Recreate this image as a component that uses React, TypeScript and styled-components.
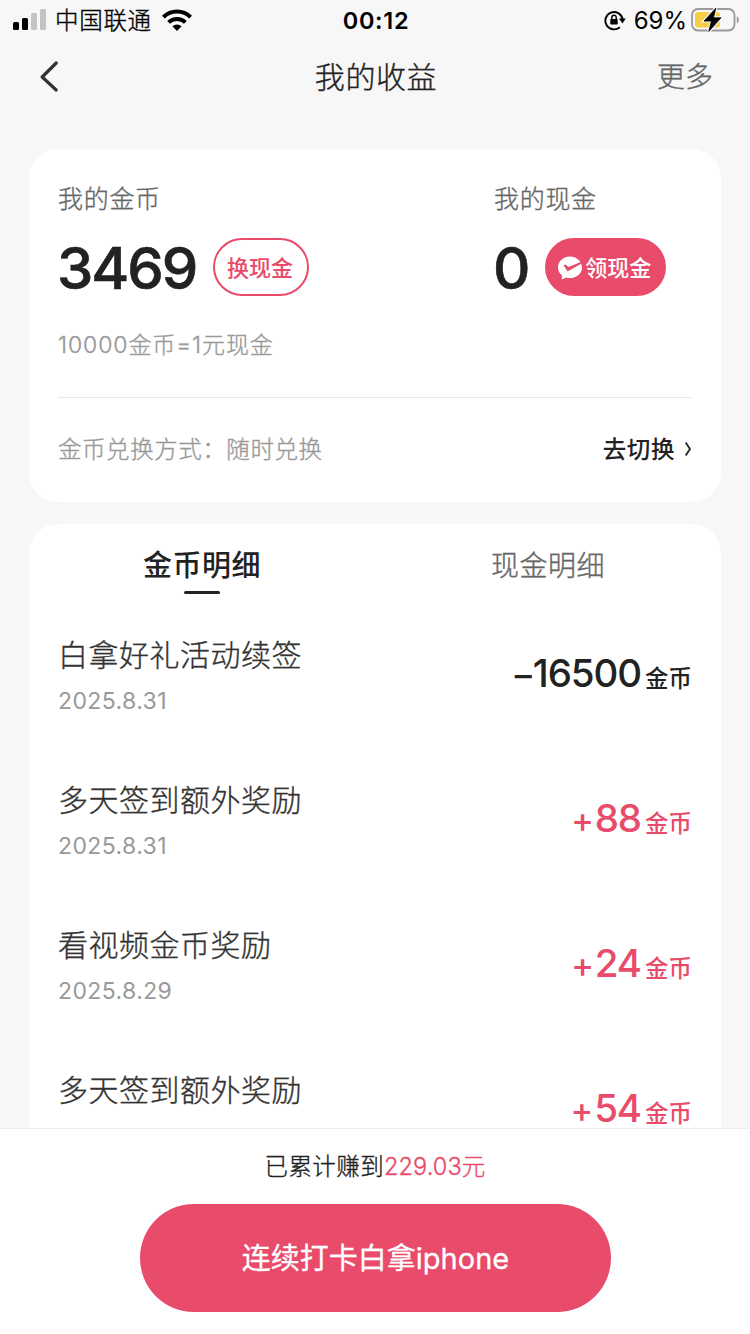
import React from 'react';
import styled, { createGlobalStyle, css } from 'styled-components';

const PINK = '#e94b6a';

const GlobalStyle = createGlobalStyle`
  * { box-sizing: border-box; }
  body {
    margin: 0;
    background: #f7f7f7;
    font-family: Inter, 'Noto Sans CJK SC', sans-serif;
    color: #222;
  }
  button { font-family: inherit; border: 0; background: none; padding: 0; margin: 0; }
`;

/* A weight between light and regular for Chinese text. */
const bookWeight = css`
  font-weight: 300;
  -webkit-text-stroke: 0.35px currentColor;
`;

const Screen = styled.div`
  width: 750px;
  height: 1334px;
  display: flex;
  flex-direction: column;
  overflow: hidden;
  background: #f7f7f7;
`;

const StatusBar = styled.header`
  height: 40px;
  flex: none;
  display: grid;
  grid-template-columns: 1fr auto 1fr;
  grid-template-rows: 40px;
  align-items: center;
  padding: 0 11px 0 13px;
  color: #000;
  line-height: 38px;
  svg { display: block; flex: none; }
`;

const StatusSide = styled.div<{ $end?: boolean }>`
  display: flex;
  align-items: center;
  height: 40px;
  justify-content: ${(p) => (p.$end ? 'flex-end' : 'flex-start')};
`;

const Carrier = styled.span`
  font-size: 23.5px;
  letter-spacing: 0.7px;
  padding-top: 2px;
  margin: 0 10px 0 8px;
  ${bookWeight}
`;

const Clock = styled.span`
  font-size: 23.5px;
  font-weight: 600;
  letter-spacing: 0.7px;
  padding-top: 2px;
`;

const Percent = styled.span`
  font-size: 24px;
  padding-top: 2px;
  margin: 0 4px 0 8px;
`;

const NavBar = styled.nav`
  height: 72px;
  flex: none;
  display: grid;
  grid-template-columns: 1fr auto 1fr;
  align-items: center;
  padding: 0 37px 0 39px;
`;

const BackButton = styled.button`
  display: flex;
`;

const NavTitle = styled.h1`
  margin: 0;
  padding-top: 2px;
  font-size: 30px;
  letter-spacing: 0.6px;
  line-height: 40px;
  ${bookWeight}
`;

const More = styled.button`
  justify-self: end;
  padding-top: 1px;
  font-size: 28px;
  line-height: 40px;
  color: #666;
  ${bookWeight}
`;

const Content = styled.main`
  flex: 1;
  min-height: 0;
  overflow: hidden;
  display: flex;
  flex-direction: column;
  gap: 22px;
  padding: 37px 29px 0;
`;

const Card = styled.section`
  flex: none;
  background: #fff;
  border-radius: 29px;
`;

const BalanceCard = styled(Card)`
  height: 353px;
  padding: 29px 29px 0;
`;

const Balances = styled.div`
  display: grid;
  grid-template-columns: 436px 1fr;
`;

const Label = styled.div`
  font-size: 25px;
  letter-spacing: 0.7px;
  line-height: 42px;
  height: 40px;
  color: #666;
  ${bookWeight}
`;

const ValueRow = styled.div`
  display: flex;
  align-items: center;
  height: 58px;
  margin-top: 20px;
  gap: 17px;
`;

const Value = styled.strong`
  margin-left: -1px;
  padding-top: 2px;
  font-size: 58px;
  font-weight: 500;
  letter-spacing: -2.1px;
  line-height: 56px;
  -webkit-text-stroke: 0.6px currentColor;
`;

const Pill = styled.button<{ $filled?: boolean }>`
  height: 58px;
  width: ${(p) => (p.$filled ? 121 : 96)}px;
  border-radius: 29px;
  border: 2px solid ${PINK};
  background: ${(p) => (p.$filled ? PINK : '#fff')};
  color: ${(p) => (p.$filled ? '#fff' : PINK)};
  display: flex;
  align-items: center;
  justify-content: center;
  gap: 3px;
  padding: 0 2px 2px 0;
  font-size: 22px;
  font-weight: 500;
  white-space: nowrap;
  svg { margin-top: 4px; }
`;

const Hint = styled.div`
  margin-top: 29px;
  height: 73px;
  font-size: 23px;
  letter-spacing: 0.9px;
  line-height: 40px;
  color: #999;
  border-bottom: 1px solid #e8e8e8;
  ${bookWeight}
`;

const ExchangeRow = styled.div`
  display: flex;
  align-items: center;
  justify-content: space-between;
  height: 100px;
  font-size: 23.5px;
  letter-spacing: 0.55px;
  color: #999;
  ${bookWeight}
`;

const SwitchLink = styled.button`
  display: flex;
  align-items: center;
  gap: 9px;
  font-size: 23.5px;
  font-weight: 500;
  letter-spacing: 0.6px;
  color: #222;
  -webkit-text-stroke: 0;
  svg { margin-top: 2px; }
`;

const DetailCard = styled(Card)`
  border-radius: 29px 29px 0 0;
`;

const Tabs = styled.div`
  display: grid;
  grid-template-columns: 1fr 1fr;
  height: 81px;
  padding-top: 21px;
`;

const Tab = styled.button<{ $active?: boolean }>`
  display: flex;
  flex-direction: column;
  align-items: center;
  font-size: ${(p) => (p.$active ? 29 : 28)}px;
  letter-spacing: 0.5px;
  line-height: 42px;
  color: ${(p) => (p.$active ? '#222' : '#666')};
  ${(p) => (p.$active ? 'font-weight: 500;' : bookWeight)}
  &::after {
    content: '';
    width: 36px;
    height: 3px;
    margin-top: 4px;
    border-radius: 2px;
    background: ${(p) => (p.$active ? '#222' : 'transparent')};
  }
`;

const Records = styled.ul`
  list-style: none;
  margin: 0;
  padding: 0 29px;
`;

const RecordRow = styled.li`
  display: flex;
  justify-content: space-between;
  height: 145px;
  padding-top: 30px;
`;

const RecordTitle = styled.div`
  font-size: 30px;
  letter-spacing: 0.5px;
  line-height: 40px;
  color: #333;
  ${bookWeight}
`;

const RecordDate = styled.div`
  margin-top: 6px;
  font-size: 23px;
  letter-spacing: 0.4px;
  line-height: 41px;
  color: #999;
`;

const Amount = styled.div<{ $gain: boolean }>`
  display: flex;
  align-items: baseline;
  margin-top: 13px;
  font-size: 38.5px;
  font-weight: 500;
  letter-spacing: -1.1px;
  line-height: 50px;
  color: ${(p) => (p.$gain ? PINK : '#222')};
`;

const Sign = styled.span`
  margin-right: 2px;
  font-size: 34px;
`;

const Unit = styled.span`
  margin-left: 4px;
  font-size: 23.5px;
  letter-spacing: 0;
`;

const Footer = styled.footer`
  flex: none;
  height: 206px;
  display: flex;
  flex-direction: column;
  align-items: center;
  padding-top: 17px;
  background: #fff;
  border-top: 1px solid #eee;
`;

const Total = styled.div`
  font-size: 23.5px;
  letter-spacing: 0.4px;
  line-height: 42px;
  height: 40px;
  ${bookWeight}
  em { font-style: normal; letter-spacing: 0.1px; color: ${PINK}; }
`;

const ActionButton = styled.button`
  width: 471px;
  height: 108px;
  margin-top: 18px;
  margin-left: 1px;
  padding-bottom: 4px;
  border-radius: 54px;
  background: ${PINK};
  color: #fff;
  font-size: 29px;
  font-weight: 400;
  -webkit-text-stroke: 0.3px currentColor;
`;

const SignalIcon = () => (
  <svg width="34" height="22" viewBox="0 0 34 22">
    <rect x="0" y="13" width="6" height="8" rx="1.5" />
    <rect x="9" y="9" width="6" height="12" rx="1.5" />
    <rect x="18" y="4" width="6" height="17" rx="1.5" fill="#c4c4c4" />
    <rect x="27" y="0" width="6" height="21" rx="1.5" fill="#c4c4c4" />
  </svg>
);

const WifiIcon = () => (
  <svg width="30" height="22" viewBox="0 0 30 22">
    <g fill="none" stroke="#000" strokeWidth="4">
      <path d="M1.4 8.2a19.2 19.2 0 0 1 27.2 0" />
      <path d="M6.6 13.4a11.9 11.9 0 0 1 16.8 0" />
    </g>
    <path d="M10.4 17.3a6.5 6.5 0 0 1 9.2 0L15 22z" />
  </svg>
);

const RotationLockIcon = () => (
  <svg width="22" height="22" viewBox="0 0 22 22">
    <path d="M15.8 18.2A8.7 8.7 0 1 1 18.6 10" fill="none" stroke="#000" strokeWidth="1.9" />
    <path d="M14.9 9.6h6.8l-3.2 5z" />
    <rect x="6.3" y="10" width="7.4" height="5.6" rx="0.8" />
    <path d="M7.8 10.400V8.400a2.200 2.200 0 0 1 4.400 0v2" fill="none" stroke="#000" strokeWidth="1.4" />
  </svg>
);

const BatteryIcon = () => (
  <svg width="48" height="26" viewBox="0 0 48 26">
    <rect x="1" y="2" width="42.5" height="21.5" rx="6" fill="none" stroke="#999" strokeWidth="1.8" />
    <path d="M45.8 9.2c2.8 1 2.8 6 0 7z" fill="#999" />
    <rect x="4" y="5" width="25" height="15.5" rx="3" fill="#f7cd45" />
    <path d="M24.8 1.2L13 14.1h7.4L17.8 24.4 30 10.8h-7.5z" stroke="#f7f7f7" strokeWidth="3" />
    <path d="M24.8 1.2L13 14.1h7.4L17.8 24.4 30 10.8h-7.5z" stroke="#000" strokeWidth="0.8" />
  </svg>
);

const BackIcon = () => (
  <svg width="20" height="32" viewBox="0 0 20 32">
    <path d="M17.2 3L3.2 17l14 13" fill="none" stroke="#333" strokeWidth="3.2" strokeLinecap="round" strokeLinejoin="round" />
  </svg>
);

const WalletIcon = () => (
  <svg width="24" height="24" viewBox="0 0 24 24">
    <path d="M12 .5C5.4.5 0 5.300 0 11.400c0 3.300 1.600 6.100 4.200 8l-.5 4.200 4.600-2.100c1.200.4 2.400.5 3.700.5 6.600 0 12-4.700 12-10.600S18.600.5 12 .5z" fill="#fff" />
    <path d="M5.600 9.200l2-.6 2.800 2.400L24 5.600v1.600L9.600 15.600z" fill={PINK} />
  </svg>
);

const ChevronIcon = () => (
  <svg width="8" height="16" viewBox="0 0 8 16">
    <path d="M1.7 1.5L6 8l-4.3 6.5" fill="none" stroke="#222" strokeWidth="1.8" />
  </svg>
);

interface RecordItem {
  title: string;
  date?: string;
  sign: string;
  amount: string;
}

const records: RecordItem[] = [
  { title: '白拿好礼活动续签', date: '2025.8.31', sign: '–', amount: '16500' },
  { title: '多天签到额外奖励', date: '2025.8.31', sign: '+', amount: '88' },
  { title: '看视频金币奖励', date: '2025.8.29', sign: '+', amount: '24' },
  { title: '多天签到额外奖励', sign: '+', amount: '54' },
];

export default function App() {
  return (
    <Screen>
      <GlobalStyle />
      <StatusBar>
        <StatusSide>
          <SignalIcon />
          <Carrier>中国联通</Carrier>
          <WifiIcon />
        </StatusSide>
        <Clock>00:12</Clock>
        <StatusSide $end>
          <RotationLockIcon />
          <Percent>69%</Percent>
          <BatteryIcon />
        </StatusSide>
      </StatusBar>
      <NavBar>
        <BackButton aria-label="返回"><BackIcon /></BackButton>
        <NavTitle>我的收益</NavTitle>
        <More>更多</More>
      </NavBar>
      <Content>
        <BalanceCard>
          <Balances>
            <div>
              <Label>我的金币</Label>
              <ValueRow>
                <Value>3469</Value>
                <Pill>换现金</Pill>
              </ValueRow>
            </div>
            <div>
              <Label>我的现金</Label>
              <ValueRow>
                <Value>0</Value>
                <Pill $filled><WalletIcon />领现金</Pill>
              </ValueRow>
            </div>
          </Balances>
          <Hint>10000金币=1元现金</Hint>
          <ExchangeRow>
            <span>金币兑换方式：随时兑换</span>
            <SwitchLink>去切换<ChevronIcon /></SwitchLink>
          </ExchangeRow>
        </BalanceCard>
        <DetailCard>
          <Tabs>
            <Tab $active>金币明细</Tab>
            <Tab>现金明细</Tab>
          </Tabs>
          <Records>
            {records.map((r, i) => (
              <RecordRow key={i}>
                <div>
                  <RecordTitle>{r.title}</RecordTitle>
                  {r.date && <RecordDate>{r.date}</RecordDate>}
                </div>
                <Amount $gain={r.sign === '+'}>
                  <Sign>{r.sign}</Sign>{r.amount}<Unit>金币</Unit>
                </Amount>
              </RecordRow>
            ))}
          </Records>
        </DetailCard>
      </Content>
      <Footer>
        <Total>已累计赚到<em>229.03元</em></Total>
        <ActionButton>连续打卡白拿iphone</ActionButton>
      </Footer>
    </Screen>
  );
}
